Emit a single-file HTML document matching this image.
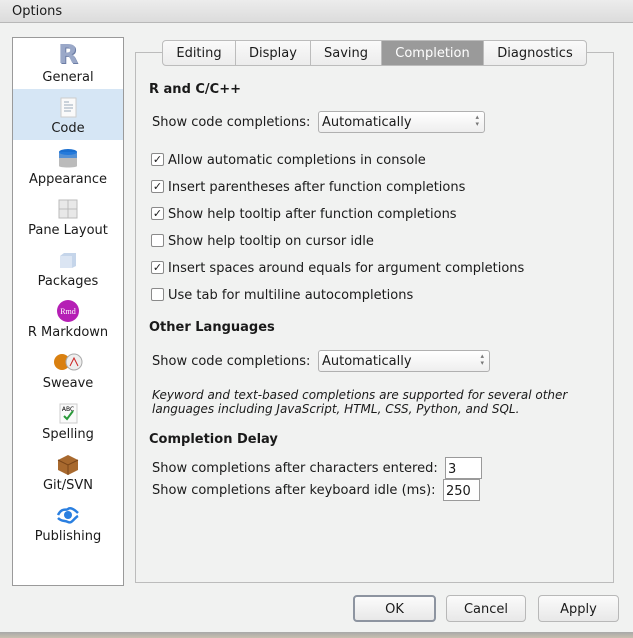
<!DOCTYPE html>
<html><head><style>
*{box-sizing:border-box;margin:0;padding:0}
body{width:633px;height:638px;overflow:hidden;background:#f1f2f1;font-family:"DejaVu Sans","Liberation Sans",sans-serif;font-size:13px;color:#1a1a1a;position:relative}
.abs{position:absolute}
.title{left:0;top:0;width:633px;height:23px;background:linear-gradient(#ececec,#dcdcdc);border-bottom:1px solid #b8b8b8;padding:4px 0 0 12px;font-size:13px}
.side{left:12px;top:37px;width:112px;height:549px;background:#fff;border:1px solid #9a9a9a}
.item{position:absolute;left:0;width:110px;height:51px;text-align:center}
.item .lbl{position:absolute;left:0;width:110px;top:32px;font-size:13px}
.item .ic{position:absolute;left:43px;top:6px;width:24px;height:24px}
.sel{background:#d6e6f5}
.panel{left:135px;top:52px;width:479px;height:531px;border:1px solid #bcbcbc}
.tabs{left:162px;top:40px;height:26px;display:flex;border:1px solid #bcbcbc;border-radius:4px;background:linear-gradient(#fafafa,#ececec)}
.tab{height:24px;line-height:26px;text-align:center;border-right:1px solid #bcbcbc}
.tab.on{background:#9a9a9a;color:#fff}
h3{position:absolute;font-size:13px;font-weight:bold;left:149px}
.t{position:absolute;white-space:nowrap}
.cb{position:absolute;left:151px;width:13px;height:13px;border:1px solid #8a8a8a;border-radius:2px;background:#fff;font-size:11px;line-height:11px;text-align:center}
.cl{position:absolute;left:168px;white-space:nowrap}
.selbox{position:absolute;height:22px;border:1px solid #b0b0b0;border-radius:3px;background:linear-gradient(#fff,#eee);padding:3px 0 0 3px}
.selbox:after{content:"▴\A▾";white-space:pre;position:absolute;right:5px;top:2px;font-size:7px;line-height:7px;color:#777}
.inp{position:absolute;height:22px;border:1px solid #9a9a9a;background:#fff;padding:4px 0 0 2px}
.btn{position:absolute;top:595px;height:27px;border:1px solid #b8b8b8;border-radius:4px;background:linear-gradient(#fbfbfb,#e8e8e8);text-align:center;line-height:28px}
</style></head><body>
<div class="abs title">Options</div>
<div class="abs side">
 <div class="item" style="top:0"><div class="ic" style="font:bold 26px 'DejaVu Sans';color:#9aa8c8;top:2px;text-shadow:1px 1px #6c7da5">R</div><div class="lbl">General</div></div>
 <div class="item sel" style="top:51px"><div class="ic"><svg width="24" height="24"><rect x="5" y="3" width="15" height="19" fill="#fafafa" stroke="#ccc"/><path d="M8 7h5M8 10h9M8 13h9M8 16h7" stroke="#9ab" stroke-width="1"/></svg></div><div class="lbl">Code</div></div>
 <div class="item" style="top:102px"><div class="ic"><svg width="24" height="24"><path d="M3 6v14c0 2 18 2 18 0V6z" fill="#bbb"/><ellipse cx="12" cy="6" rx="9" ry="3" fill="#1a6fd0"/><rect x="3" y="6" width="18" height="6" fill="#2a7fe0" opacity=".7"/></svg></div><div class="lbl">Appearance</div></div>
 <div class="item" style="top:153px"><div class="ic"><svg width="24" height="24"><rect x="3" y="3" width="18" height="18" fill="#e8e8e8" stroke="#bbb"/><path d="M12 3v18M3 12h18" stroke="#bbb"/></svg></div><div class="lbl">Pane Layout</div></div>
 <div class="item" style="top:204px"><div class="ic"><svg width="24" height="24"><path d="M4 8l4-3h12v13l-4 2H4z" fill="#c5d5ea"/><rect x="4" y="8" width="12" height="12" fill="#dbe5f3"/></svg></div><div class="lbl">Packages</div></div>
 <div class="item" style="top:255px"><div class="ic"><svg width="24" height="24"><circle cx="12" cy="12" r="11" fill="#b51fb5"/><text x="12" y="15" font-size="8" fill="#fff" text-anchor="middle" font-family="Liberation Serif">Rmd</text></svg></div><div class="lbl">R Markdown</div></div>
 <div class="item" style="top:306px"><div class="ic" style="left:40px;width:32px"><svg width="32" height="24"><circle cx="9" cy="12" r="8" fill="#d98010"/><circle cx="21" cy="12" r="8" fill="#eee" stroke="#aaa"/><path d="M17 16l4-8 4 8" stroke="#c22" fill="none"/></svg></div><div class="lbl">Sweave</div></div>
 <div class="item" style="top:357px"><div class="ic"><svg width="24" height="24"><rect x="4" y="3" width="17" height="19" fill="#fafafa" stroke="#ccc"/><text x="12" y="10" font-size="6" text-anchor="middle">ABC</text><path d="M8 15l3 3 6-8" stroke="#2a9a3a" stroke-width="2" fill="none"/></svg></div><div class="lbl">Spelling</div></div>
 <div class="item" style="top:408px"><div class="ic"><svg width="24" height="24"><path d="M2 8l10-5 10 5v10l-10 5-10-5z" fill="#a8692e"/><path d="M2 8l10 5 10-5M12 13v10" stroke="#7a4518" fill="none"/></svg></div><div class="lbl">Git/SVN</div></div>
 <div class="item" style="top:459px"><div class="ic"><svg width="24" height="24"><circle cx="12" cy="12" r="4" fill="#2a7fe0"/><path d="M2 12c4-8 8-4 10-6s6 0 10 4M2 15c4 4 6 2 10 4s6-4 10-6" stroke="#2a7fe0" stroke-width="2.5" fill="none"/></svg></div><div class="lbl">Publishing</div></div>
</div>
<div class="abs panel"></div>
<div class="abs tabs">
 <div class="tab" style="width:73px">Editing</div>
 <div class="tab" style="width:75px">Display</div>
 <div class="tab" style="width:71px">Saving</div>
 <div class="tab on" style="width:102px">Completion</div>
 <div class="tab" style="width:102px;border-right:0">Diagnostics</div>
</div>
<h3 style="top:82px">R and C/C++</h3>
<div class="t" style="left:152px;top:115px">Show code completions:</div>
<div class="selbox" style="left:318px;top:111px;width:167px">Automatically</div>
<div class="cb" style="top:153px">✓</div><div class="cl" style="top:153px">Allow automatic completions in console</div>
<div class="cb" style="top:180px">✓</div><div class="cl" style="top:180px">Insert parentheses after function completions</div>
<div class="cb" style="top:207px">✓</div><div class="cl" style="top:207px">Show help tooltip after function completions</div>
<div class="cb" style="top:234px"></div><div class="cl" style="top:234px">Show help tooltip on cursor idle</div>
<div class="cb" style="top:261px">✓</div><div class="cl" style="top:261px">Insert spaces around equals for argument completions</div>
<div class="cb" style="top:288px"></div><div class="cl" style="top:288px">Use tab for multiline autocompletions</div>
<h3 style="top:320px">Other Languages</h3>
<div class="t" style="left:152px;top:354px">Show code completions:</div>
<div class="selbox" style="left:318px;top:350px;width:172px">Automatically</div>
<div class="t" style="left:152px;top:388px;font-size:12px;font-style:italic;line-height:14px">Keyword and text-based completions are supported for several other<br>languages including JavaScript, HTML, CSS, Python, and SQL.</div>
<h3 style="top:432px">Completion Delay</h3>
<div class="t" style="left:152px;top:461px">Show completions after characters entered:</div>
<div class="inp" style="left:445px;top:457px;width:37px">3</div>
<div class="t" style="left:152px;top:483px">Show completions after keyboard idle (ms):</div>
<div class="inp" style="left:443px;top:479px;width:37px">250</div>
<div class="btn" style="left:353px;width:83px;border:2px solid #8d94a0;line-height:26px">OK</div>
<div class="btn" style="left:446px;width:80px">Cancel</div>
<div class="btn" style="left:538px;width:81px">Apply</div>
<div class="abs" style="left:0;top:632px;width:633px;height:6px;background:linear-gradient(#a8a8a8,#c8c0b0)"></div>
</body></html>
